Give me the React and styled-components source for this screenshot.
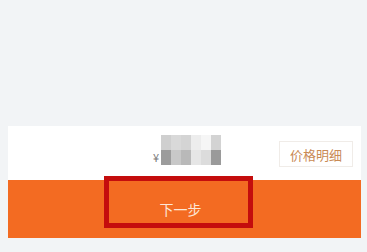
import React from 'react'
import styled, { createGlobalStyle } from 'styled-components'

const Global = createGlobalStyle`
  html, body {
    margin: 0;
    padding: 0;
    background: #f2f4f6;
    font-family: "Noto Sans CJK SC", "Noto Sans", sans-serif;
  }
`

const Page = styled.div`
  width: 367px;
  height: 252px;
  display: flex;
  flex-direction: column;
  padding: 126px 6px 0 8px;
  box-sizing: border-box;
`

const PricePanel = styled.div`
  height: 54px;
  background: #fff;
  display: flex;
  align-items: center;
  justify-content: flex-end;
  padding-right: 8px;
`

const Price = styled.div`
  display: flex;
  align-items: flex-end;
  margin-right: 58px;
  margin-bottom: 6px;
`

const Yen = styled.span`
  font-size: 11px;
  color: #777;
  line-height: 1;
  margin-right: 2px;
  margin-bottom: 2px;
`

const Mosaic = styled.div`
  display: grid;
  grid-template-columns: repeat(6, 10px);
  grid-auto-rows: 15px;
`

const Cell = styled.div`
  background: ${p => p.$c};
`

const DetailButton = styled.button`
  width: 74px;
  height: 26px;
  margin-top: 2px;
  border: 1px solid #f0ece8;
  background: #fff;
  color: #c98a55;
  font-family: inherit;
  font-size: 13px;
  padding: 0;
`

const NextBar = styled.div`
  height: 58px;
  background: #f36b22;
  display: flex;
  align-items: center;
  position: relative;
`

const Highlight = styled.div`
  position: absolute;
  left: 96px;
  top: -4px;
  width: 139px;
  height: 42px;
  border: 5px solid #c40d0d;
`

const NextLabel = styled.span`
  width: 100%;
  text-align: center;
  color: #fde7d6;
  font-size: 14px;
  padding-right: 8px;
`

const cells = [
  '#cfcfcf', '#d9d9d9', '#d4d4d4', '#ededed', '#f6f6f6', '#d3d3d3',
  '#9c9c9c', '#c8c8c8', '#b9b9b9', '#e6e6e6', '#dcdcdc', '#9a9a9a',
]

export default function App() {
  return (
    <Page>
      <Global />
      <PricePanel>
        <Price>
          <Yen>¥</Yen>
          <Mosaic>
            {cells.map((c, i) => <Cell key={i} $c={c} />)}
          </Mosaic>
        </Price>
        <DetailButton>价格明细</DetailButton>
      </PricePanel>
      <NextBar>
        <Highlight />
        <NextLabel>下一步</NextLabel>
      </NextBar>
    </Page>
  )
}
